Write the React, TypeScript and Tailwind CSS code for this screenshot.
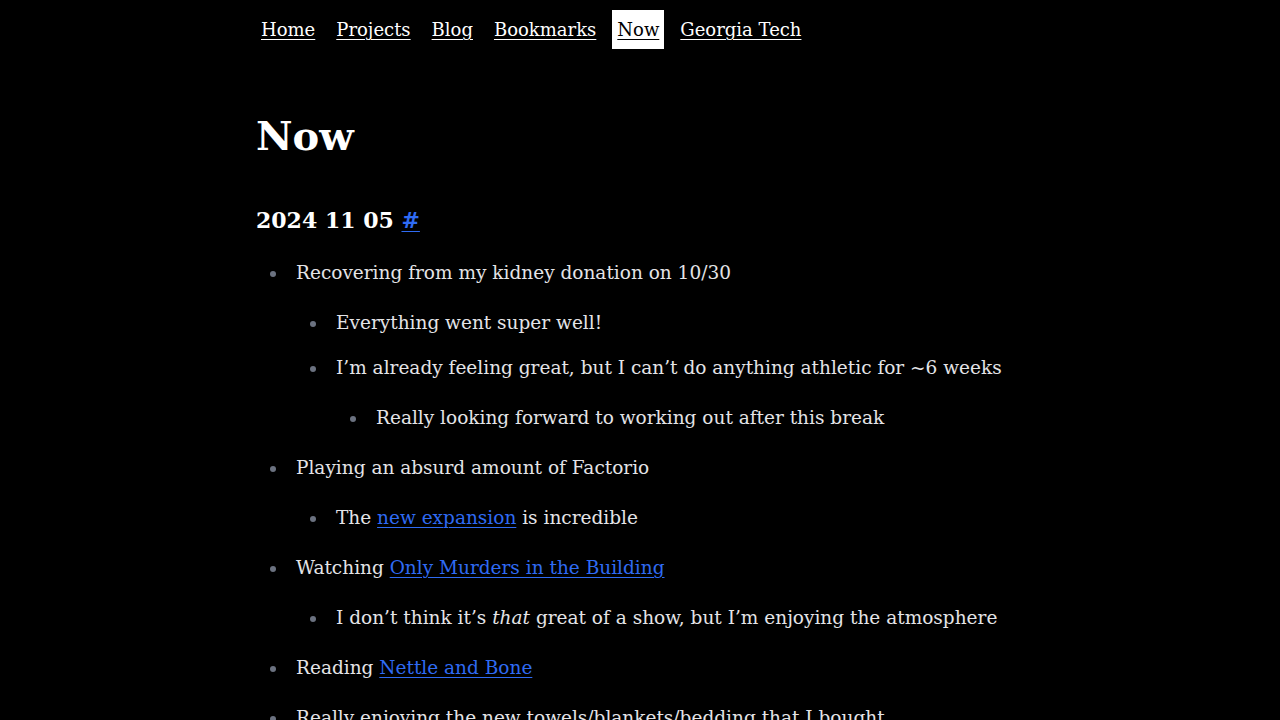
const navLinks = [
  { label: "Home" },
  { label: "Projects" },
  { label: "Blog" },
  { label: "Bookmarks" },
  { label: "Now", active: true },
  { label: "Georgia Tech" },
];

const font = { fontFamily: "'DejaVu Serif', 'Liberation Serif', serif" };

function A({ children }: { children: React.ReactNode }) {
  return (
    <a href="#" className="text-[#2f6bf3] underline underline-offset-[3px] decoration-1">
      {children}
    </a>
  );
}

export default function App() {
  return (
    <div className="min-h-screen bg-black text-[#e4e4e7]" style={font}>
      <div className="mx-auto w-[768px]">
        {/* Nav */}
        <nav className="flex gap-[11px] pt-[10px]">
          {navLinks.map((link) => (
            <a
              key={link.label}
              href="#"
              className={
                "px-[5px] h-[39px] flex items-center text-[18px] underline underline-offset-[3px] decoration-1 " +
                (link.active ? "bg-white text-black" : "text-white")
              }
            >
              {link.label}
            </a>
          ))}
        </nav>

        {/* Title */}
        <h1 className="mt-[60px] text-[40px] leading-[53px] font-bold text-white">Now</h1>

        <h2 className="mt-[40px] text-[22px] leading-[36px] font-bold text-white">
          2024 11 05 <A>#</A>
        </h2>

        {/* Entries */}
        <ul className="mt-[6px] list-disc pl-[32px] text-[18.5px] leading-[30px] marker:text-[#6b7280] [&_li]:pl-[8px] [&>li]:mt-[20px]">
          <li>
            Recovering from my kidney donation on 10/30
            <ul className="list-disc pl-[32px] mt-[20px] mb-[20px] [&>li]:mt-[15px] [&>li:first-child]:mt-0">
              <li>Everything went super well!</li>
              <li>
                I’m already feeling great, but I can’t do anything athletic for ~6 weeks
                <ul className="list-disc pl-[32px] mt-[20px]">
                  <li>Really looking forward to working out after this break</li>
                </ul>
              </li>
            </ul>
          </li>
          <li>
            Playing an absurd amount of Factorio
            <ul className="list-disc pl-[32px] mt-[20px] mb-[20px]">
              <li>
                The <A>new expansion</A> is incredible
              </li>
            </ul>
          </li>
          <li>
            Watching <A>Only Murders in the Building</A>
            <ul className="list-disc pl-[32px] mt-[20px] mb-[20px]">
              <li>
                I don’t think it’s <em>that</em> great of a show, but I’m enjoying the atmosphere
              </li>
            </ul>
          </li>
          <li>
            Reading <A>Nettle and Bone</A>
          </li>
          <li>Really enjoying the new towels/blankets/bedding that I bought</li>
        </ul>
      </div>
    </div>
  );
}
